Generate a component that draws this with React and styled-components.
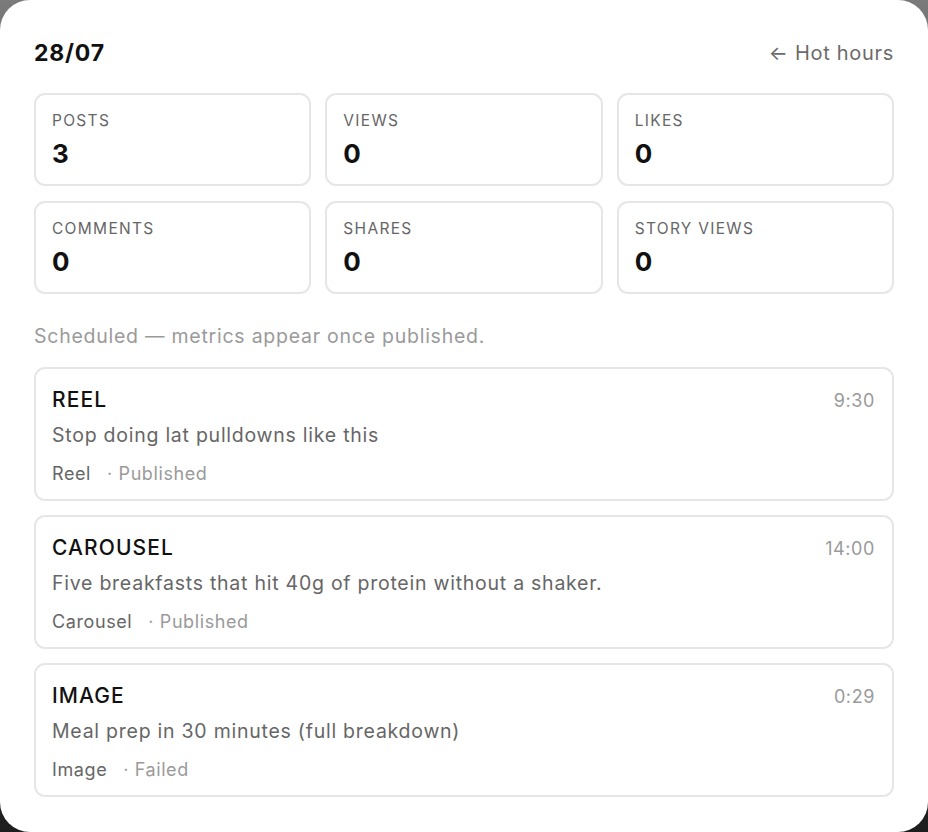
import React from "react";
import styled, { createGlobalStyle } from "styled-components";

const GlobalStyle = createGlobalStyle`
  html, body {
    margin: 0;
    padding: 0;
  }
  body {
    background: linear-gradient(180deg, #7a7a7a 0%, #4a4a4a 50%, #1e1e1e 100%);
    font-family: Inter, "Noto Sans", "Liberation Sans", sans-serif;
    -webkit-font-smoothing: antialiased;
  }
`;

const Modal = styled.div`
  box-sizing: border-box;
  width: 928px;
  height: 832px;
  background: #fff;
  border-radius: 30px;
  padding: 36px 34px 0 34px;
  display: flex;
  flex-direction: column;
`;

const Header = styled.div`
  display: flex;
  align-items: center;
  justify-content: space-between;
  height: 34px;
`;

const DayTitle = styled.h2`
  margin: 0;
  font-size: 23px;
  font-weight: 700;
  color: #111;
  letter-spacing: 0.8px;
`;

const BackLink = styled.a`
  font-size: 20px;
  color: #6b6b6b;
  text-decoration: none;
  cursor: pointer;
  letter-spacing: 0.7px;
`;

const StatGrid = styled.div`
  display: grid;
  grid-template-columns: repeat(3, 1fr);
  gap: 15px 14px;
  margin-top: 23px;
`;

const StatCard = styled.div`
  box-sizing: border-box;
  height: 93px;
  border: 2px solid #e6e6e6;
  border-radius: 11px;
  padding: 16px 16px;
  display: flex;
  flex-direction: column;
  gap: 6px;
`;

const StatLabel = styled.div`
  font-size: 15.5px;
  color: #666;
  text-transform: uppercase;
  letter-spacing: 1.3px;
  line-height: 20px;
`;

const StatValue = styled.div`
  font-size: 26px;
  font-weight: 700;
  color: #111;
  line-height: 33px;
`;

const Note = styled.p`
  margin: 29px 0 0 0;
  font-size: 19.5px;
  color: #9a9a9a;
  line-height: 26px;
  letter-spacing: 0.75px;
`;

const PostList = styled.div`
  display: flex;
  flex-direction: column;
  gap: 14px;
  margin-top: 18px;
`;

const PostCard = styled.div`
  box-sizing: border-box;
  height: 134px;
  border: 2px solid #e6e6e6;
  border-radius: 11px;
  padding: 17px 17px 0 16px;
  display: flex;
  flex-direction: column;
`;

const PostTop = styled.div`
  display: flex;
  justify-content: space-between;
  align-items: baseline;
`;

const PostType = styled.div`
  font-size: 21px;
  font-weight: 500;
  color: #111;
  letter-spacing: 1.1px;
  line-height: 28px;
`;

const PostTime = styled.div`
  font-size: 18px;
  color: #9a9a9a;
  letter-spacing: 0.6px;
`;

const PostText = styled.div`
  margin-top: 8px;
  font-size: 19.5px;
  color: #666;
  line-height: 26px;
  letter-spacing: 0.75px;
`;

const PostMeta = styled.div`
  margin-top: 14px;
  display: flex;
  gap: 16px;
  font-size: 18px;
  line-height: 24px;
  letter-spacing: 0.6px;
`;

const MetaKind = styled.span`
  color: #666;
`;

const MetaStatus = styled.span`
  color: #9a9a9a;
`;

const stats = [
  { label: "Posts", value: 3 },
  { label: "Views", value: 0 },
  { label: "Likes", value: 0 },
  { label: "Comments", value: 0 },
  { label: "Shares", value: 0 },
  { label: "Story views", value: 0 },
];

const posts = [
  { type: "Reel", time: "9:30", text: "Stop doing lat pulldowns like this", status: "Published" },
  { type: "Carousel", time: "14:00", text: "Five breakfasts that hit 40g of protein without a shaker.", status: "Published" },
  { type: "Image", time: "0:29", text: "Meal prep in 30 minutes (full breakdown)", status: "Failed" },
];

export default function App() {
  return (
    <>
      <GlobalStyle />
      <Modal>
        <Header>
          <DayTitle>28/07</DayTitle>
          <BackLink>← Hot hours</BackLink>
        </Header>

        <StatGrid>
          {stats.map((s) => (
            <StatCard key={s.label}>
              <StatLabel>{s.label}</StatLabel>
              <StatValue>{s.value}</StatValue>
            </StatCard>
          ))}
        </StatGrid>

        <Note>Scheduled — metrics appear once published.</Note>

        <PostList>
          {posts.map((p) => (
            <PostCard key={p.type}>
              <PostTop>
                <PostType>{p.type.toUpperCase()}</PostType>
                <PostTime>{p.time}</PostTime>
              </PostTop>
              <PostText>{p.text}</PostText>
              <PostMeta>
                <MetaKind>{p.type}</MetaKind>
                <MetaStatus>· {p.status}</MetaStatus>
              </PostMeta>
            </PostCard>
          ))}
        </PostList>
      </Modal>
    </>
  );
}
